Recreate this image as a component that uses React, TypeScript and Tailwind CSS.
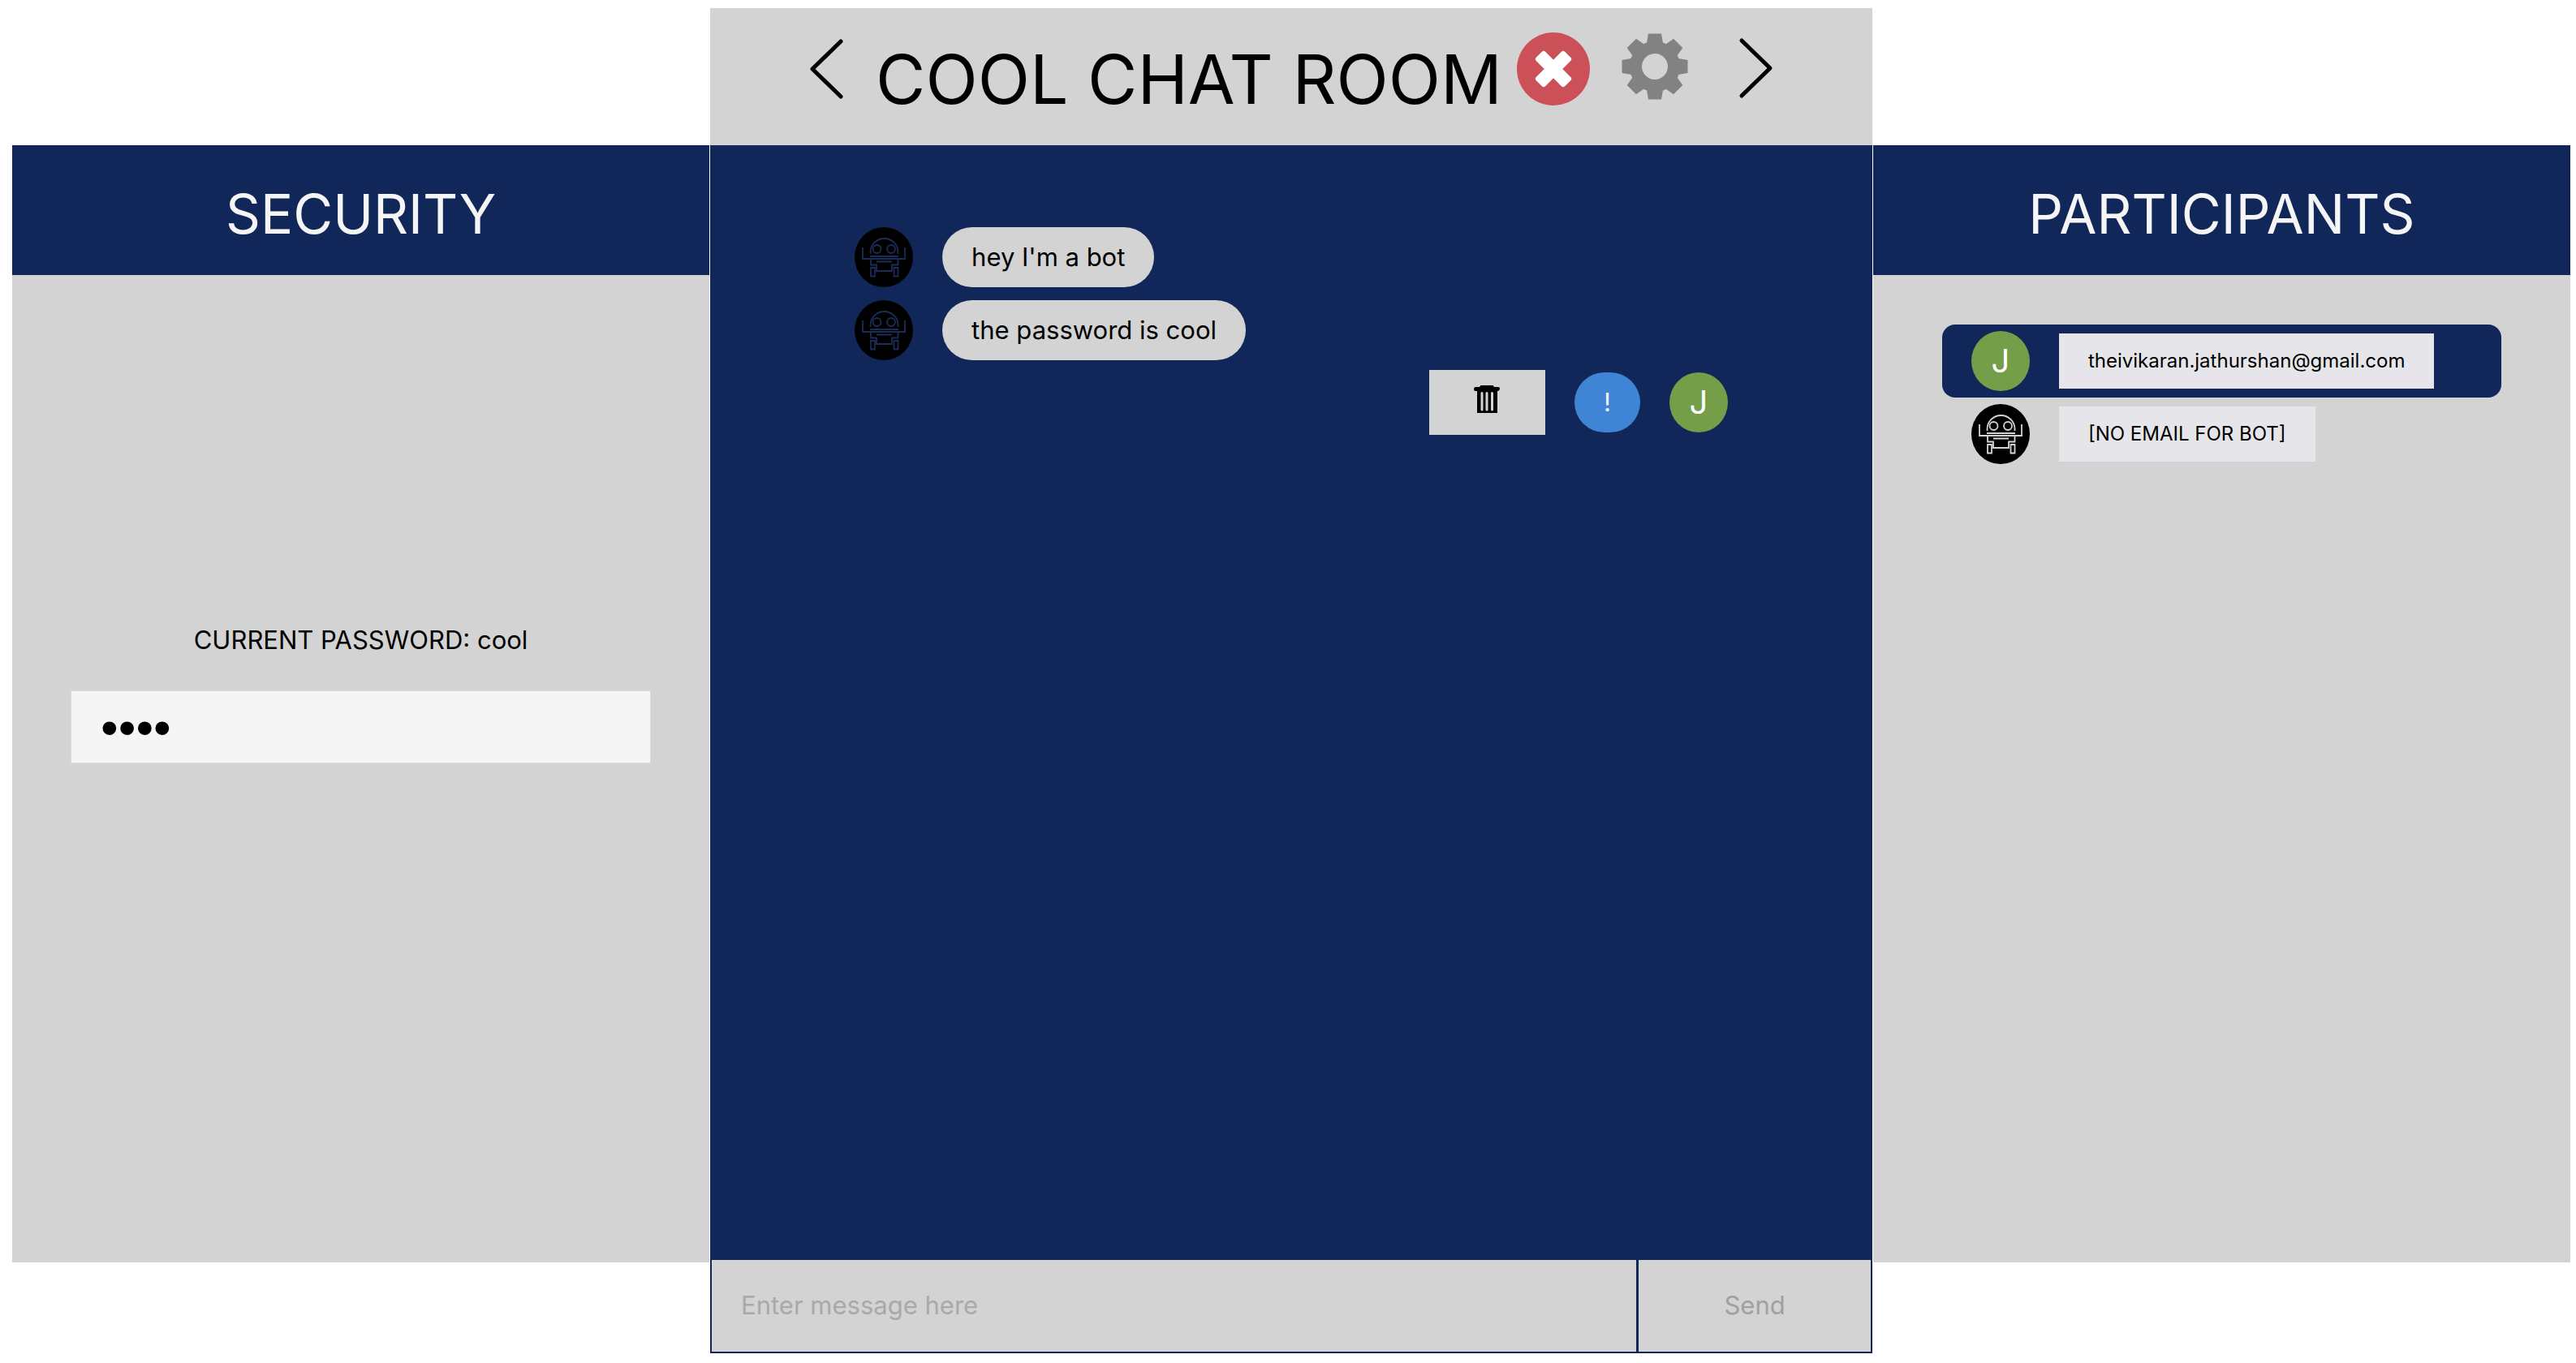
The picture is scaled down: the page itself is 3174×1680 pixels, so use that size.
import { useState } from "react";

function Robot({ color }: { color: string }) {
  return (
    <svg viewBox="0 0 72 74" className="h-[74px] w-[72px] shrink-0" fill="none" stroke={color} strokeWidth="1.800">
      <ellipse cx="36" cy="37" rx="36" ry="37" fill="#000" stroke="none" />
      <path d="M19.500 33V31A17 17 0 0 1 53.500 31V33" />
      <circle cx="27.500" cy="27" r="5" />
      <circle cx="45" cy="27" r="5" />
      <path d="M10 25V39H62V25M19 36H54M27 42.500H46" />
      <path d="M20 39V46.500H27V54H46V46.500H53.500V39" />
      <path d="M20 50H25V60.500H20ZM48.500 50H53.500V60.500H48.500Z" />
    </svg>
  );
}

function Initial() {
  return (
    <span className="flex h-[74px] w-[72px] shrink-0 items-center justify-center rounded-[50%] bg-[#749e48] text-[40px] leading-none text-white">
      J
    </span>
  );
}

function Chevron({ flip }: { flip?: boolean }) {
  return (
    <svg viewBox="0 0 88 88" className="h-[88px] w-[88px]" fill="none" stroke="#000" strokeWidth="5" strokeLinecap="round" strokeLinejoin="round">
      <path d={flip ? "M27 10L62 44L27 78" : "M61 11L26 45L61 79"} />
    </svg>
  );
}

function Gear() {
  const teeth = [0, 45, 90, 135, 180, 225, 270, 315];
  return (
    <svg viewBox="-42 -42 84 84" className="h-[84px] w-[84px]">
      <circle r="23.500" fill="none" stroke="#828282" strokeWidth="15" />
      {teeth.map((a) => (
        <path key={a} d="M-10.500 -26L-8 -40.500H8L10.500 -26Z" fill="#828282" transform={`rotate(${a})`} />
      ))}
    </svg>
  );
}

function Trash() {
  return (
    <svg viewBox="0 0 32 36" className="h-9 w-8">
      <path d="M2 3H7L8.500 1H23.500L25 3H30Q32 3 32 5T30 8H29V35H4V8H2Q0 8 0 5.500T2 3Z" fill="#000" />
      <path d="M10 10.500V31M16 10.500V31M22.500 10.500V31" stroke="#d3d3d3" strokeWidth="3" strokeLinecap="round" />
    </svg>
  );
}

function SideHeader({ children }: { children: string }) {
  return (
    <h2 className="flex h-40 items-center justify-center bg-[#112759] pt-2 text-[67px] leading-none text-[#f5f5f5]">
      {children}
    </h2>
  );
}

export default function App() {
  const [message, setMessage] = useState("");
  const [password, setPassword] = useState("cool");
  return (
    <div className="grid grid-cols-[3fr_5fr_3fr] gap-x-px bg-white pt-[10px] pr-[7px] pb-3 pl-[15px] font-['Inter',sans-serif] text-black">
      <aside className="mt-[169px] mb-28 flex flex-col bg-[#d3d3d3]">
        <SideHeader>SECURITY</SideHeader>
        <div className="flex grow flex-col px-[72px] pt-[428px]">
          <label htmlFor="password" className="text-center text-[31px] leading-[44px]">
            CURRENT PASSWORD: cool
          </label>
          <input
            id="password"
            type="password"
            value={password}
            onChange={(e) => setPassword(e.target.value)}
            className="mt-10 h-[90px] w-full border border-[#dadada] bg-[#f5f5f5] px-9 font-['Liberation_Sans',sans-serif] text-[62px] outline-none"
          />
        </div>
      </aside>

      <main className="flex flex-col">
        <header className="flex h-[169px] items-start justify-between bg-[#d3d3d3] px-[100px] pt-[30px]">
          <div className="flex items-start gap-4">
            <button aria-label="Previous"><Chevron /></button>
            <h1 className="pt-1 text-[84px] leading-[108px] whitespace-nowrap">COOL CHAT ROOM</h1>
          </div>
          <div className="flex items-start gap-[38px]">
            <button aria-label="Close">
              <svg viewBox="-45 -45 90 90" className="h-[90px] w-[90px]" fill="#fff">
                <circle r="45" fill="#cc5058" />
                <rect x="-25" y="-8" width="50" height="16" rx="3" transform="rotate(45)" />
                <rect x="-25" y="-8" width="50" height="16" rx="3" transform="rotate(-45)" />
              </svg>
            </button>
            <button aria-label="Settings"><Gear /></button>
            <button aria-label="Next"><Chevron flip /></button>
          </div>
        </header>
        <section className="flex h-[1374px] flex-col gap-4 bg-[#112759] px-[178px] pt-[101px] text-[31px]">
          {["hey I'm a bot", "the password is cool"].map((text) => (
            <div key={text} className="flex items-center gap-9">
              <Robot color="#1b2c57" />
              <p className="rounded-full bg-[#d3d3d3] px-9 py-4 leading-[42px]">{text}</p>
            </div>
          ))}
          <div className="-mt-1 flex items-center justify-end gap-9">
            <button aria-label="Delete message" className="flex h-20 w-[143px] items-center justify-center bg-[#d3d3d3] pb-2">
              <Trash />
            </button>
            <p className="rounded-full bg-[#4084d6] px-9 py-4 leading-[42px] text-[#f5f5f5]">!</p>
            <Initial />
          </div>
        </section>
        <form
          className="grid h-[115px] grid-cols-[4fr_1fr] border-x-2 border-b-2 border-[#112759] bg-[#d3d3d3] text-[31px]"
          onSubmit={(e) => e.preventDefault()}
        >
          <input
            aria-label="Message"
            placeholder="Enter message here"
            value={message}
            onChange={(e) => setMessage(e.target.value)}
            className="min-w-0 border-r-3 border-[#112759] px-9 outline-none placeholder:text-[#a9a9a9]"
          />
          <button disabled className="text-[#a0a0a0]">Send</button>
        </form>
      </main>

      <aside className="mt-[169px] mb-28 flex flex-col bg-[#d3d3d3]">
        <SideHeader>PARTICIPANTS</SideHeader>
        <ul className="px-[85px] pt-[61px] text-[24px] leading-[34px]">
          <li className="flex h-[90px] items-center gap-9 rounded-2xl bg-[#112759] px-9">
            <Initial />
            <span className="bg-[#e6e6ea] px-9 py-[17px]">theivikaran.jathurshan@gmail.com</span>
          </li>
          <li className="flex h-[90px] items-center gap-9 px-9">
            <Robot color="#d3d3d3" />
            <span className="bg-[#e6e6ea] px-9 py-[17px]">[NO EMAIL FOR BOT]</span>
          </li>
        </ul>
      </aside>
    </div>
  );
}
